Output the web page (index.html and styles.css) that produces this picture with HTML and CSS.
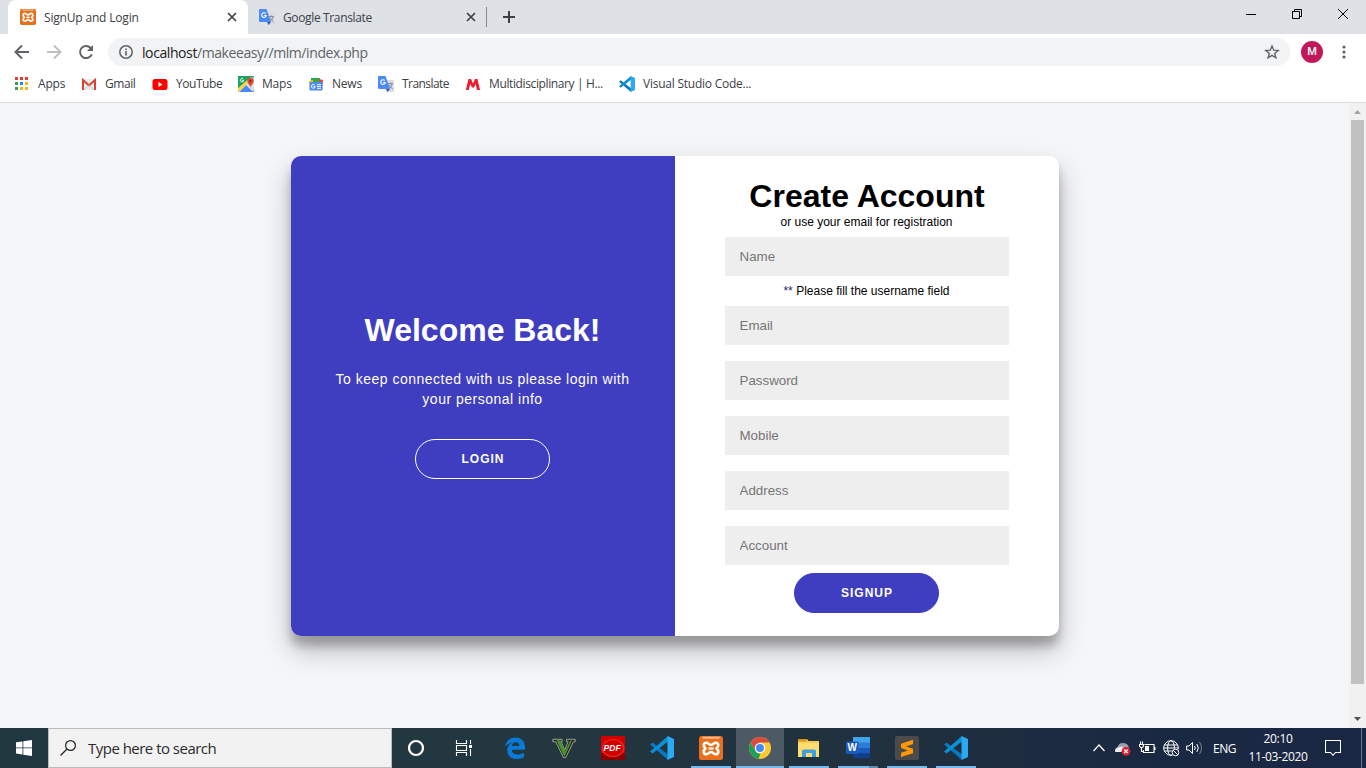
FILE: index.html
```html
<!DOCTYPE html>
<html lang="en">
<head>
<meta charset="utf-8">
<title>SignUp and Login</title>
<link rel="stylesheet" href="styles.css">
</head>
<body>
<svg class="defs" aria-hidden="true">
  <symbol id="xampp" viewBox="0 0 24 24">
    <rect width="24" height="24" rx="2.500" fill="#e8701d"/>
    <path d="M3 .8h18l-1 2H4z" fill="#f7b98b"/>
    <path d="M7.500 6.700C9.500 6.700 10 9 12 9s2.500-2.300 4.500-2.300c3.500 0 3.500 4 1 5.800 2.500 1.800 2.500 5.800-1 5.800-2 0-2.500-2.300-4.500-2.300s-2.500 2.300-4.500 2.300c-3.500 0-3.500-4-1-5.800-2.500-1.800-2.500-5.800 1-5.800z" fill="none" stroke="#fff" stroke-width="2.600" stroke-linejoin="round"/>
    <path d="M9.500 12.500h5" stroke="#fff" stroke-width="2.200"/>
  </symbol>
  <symbol id="translate" viewBox="0 0 16 16">
    <path d="M6 4h8.500Q16 4 16 5.500V16H9z" fill="#dadce0"/>
    <path d="M8 13h4l-2.500 3z" fill="#3554c7"/>
    <path d="M1 0h6.500L12 13H1.500Q0 13 0 11.500V1Q0 0 1 0z" fill="#4c8bf5"/>
    <path d="M6.700 4.500A2.300 2.300 0 1 0 7.300 6.500H5.200" fill="none" stroke="#fff" stroke-width="1.100"/>
    <path d="M10 7.700h5M12.500 6.500v1.200M14 8c-.5 2.200-1.900 3.800-3.500 4.600M11.200 9c.8 1.500 2 2.800 3.500 3.800" fill="none" stroke="#74808b" stroke-width=".9"/>
  </symbol>
  <symbol id="vscode" viewBox="0 0 24 24">
    <path d="M0 8.500l2.500-2L18 18.500V24z" fill="#0879bf"/>
    <path d="M0 15.500l2.500 2L18 5.500V0z" fill="#0d8fd6"/>
    <path d="M17.500 0L24 3v18l-6.500 3z" fill="#29aaf2"/>
  </symbol>
  <symbol id="close" viewBox="0 0 10 10">
    <path d="M1 1l8 8M9 1L1 9" fill="none" stroke="#3c4043" stroke-width="1.700"/>
  </symbol>
</svg>

<header class="tabstrip">
  <div class="tab tab-active">
    <svg class="i16"><use href="#xampp"/></svg>
    <span class="tab-title t-signup">SignUp and Login</span>
    <svg class="tab-close"><use href="#close"/></svg>
  </div>
  <div class="tab">
    <svg class="i16"><use href="#translate"/></svg>
    <span class="tab-title t-google">Google Translate</span>
    <svg class="tab-close"><use href="#close"/></svg>
  </div>
  <span class="tab-sep"></span>
  <svg class="newtab" viewBox="0 0 12 12"><path d="M6 0v12M0 6h12" stroke="#3c4043" stroke-width="2"/></svg>
  <div class="win-controls">
    <svg viewBox="0 0 12 12"><path d="M1 6.500h10" stroke="#000"/></svg>
    <svg viewBox="0 0 12 12"><path d="M1.500 3.500h7v7h-7zM3.500 3.500v-2h7v7h-2" fill="none" stroke="#000"/></svg>
    <svg viewBox="0 0 12 12"><path d="M1 1l10 10M11 1L1 11" stroke="#000"/></svg>
  </div>
</header>

<nav class="toolbar">
  <svg class="nav-i" viewBox="0 0 16 16"><path d="M15 8H2M8 1.500L1.500 8 8 14.500" fill="none" stroke="#5f6368" stroke-width="2"/></svg>
  <svg class="nav-i" viewBox="0 0 16 16"><path d="M1 8h13M8 1.500L14.500 8 8 14.500" fill="none" stroke="#bdbfc1" stroke-width="2"/></svg>
  <svg class="nav-i" viewBox="0 0 16 16"><path d="M13.800 10.300A6.100 6.100 0 1 1 12.500 3.700L14 5.200" fill="none" stroke="#5f6368" stroke-width="2"/><path d="M15 1v6H9z" fill="#5f6368"/></svg>
  <div class="omnibox">
    <svg class="info" viewBox="0 0 14 14"><circle cx="7" cy="7" r="6.200" fill="none" stroke="#5f6368" stroke-width="1.500"/><path d="M7 6v4.500M7 3.500V5" stroke="#5f6368" stroke-width="1.600"/></svg>
    <span class="url"><span class="host">localhost</span>/makeeasy//mlm/index.php</span>
    <svg class="star" viewBox="0 0 16 16"><path d="M8 2l1.700 4.200 4.500.3-3.500 2.900 1.200 4.400L8 11.400l-3.900 2.400 1.200-4.400L1.800 6.500l4.500-.3z" fill="none" stroke="#5f6368" stroke-width="1.400"/></svg>
  </div>
  <span class="avatar">M</span>
  <svg class="menu" viewBox="0 0 4 14"><g fill="#5f6368"><circle cx="2" cy="2" r="1.600"/><circle cx="2" cy="7" r="1.600"/><circle cx="2" cy="12" r="1.600"/></g></svg>
</nav>

<nav class="bookmarks">
  <a><svg class="i16" viewBox="0 0 16 16"><g fill="#ea3b30"><path d="M1 1h3v3H1zM6 1h3v3H6zM11 1h3v3h-3z"/></g><path d="M1 6h3v3H1zM1 11h3v3H1z" fill="#34a04f"/><path d="M6 6h3v3H6z" fill="#1a8cff"/><path d="M11 6h3v3h-3zM6 11h3v3H6zM11 11h3v3h-3z" fill="#fab515"/></svg><span class="b-apps">Apps</span></a>
  <a><svg class="i16" viewBox="0 0 16 16"><path d="M1 3h14v11H1z" fill="#eceaea"/><path d="M2 14V4l6 5.500L14 4v10" fill="none" stroke="#d54335" stroke-width="2"/><path d="M3.500 13.500L8 9.500l4.500 4" fill="none" stroke="#ccc"/></svg><span class="b-gmail">Gmail</span></a>
  <a><svg class="i16" viewBox="0 0 16 16"><rect x=".5" y="3" width="15" height="11" rx="2.500" fill="#f00"/><path d="M6.500 6l4 2.500-4 2.500z" fill="#fff"/></svg><span class="b-youtube">YouTube</span></a>
  <a><svg class="i16" viewBox="0 0 16 16"><rect width="16" height="16" rx="1" fill="#1ea362"/><path d="M0 14L14 1l2 1v12l-2 2H1z" fill="#dfe1e3"/><path d="M1 16l7-7 7 7z" fill="#4a89f3"/><path d="M0 12v3l1 1L13 4V1z" fill="#ffd34b"/><path d="M0 0h12L0 12z" fill="#1ea362"/><path d="M5.200 3A1.700 1.700 0 1 0 5.700 4.300H4" fill="none" stroke="#fff" stroke-width=".9"/><path d="M12.500 12c0-3-3.200-4-3.200-7a3.200 3.200 0 0 1 6.400 0c0 3-3.200 4-3.200 7z" fill="#dd4b3e"/><circle cx="12.500" cy="5" r="1.200" fill="#822f2b"/></svg><span class="b-maps">Maps</span></a>
  <a><svg class="i16" viewBox="0 0 16 16"><path d="M3 2l9 0v5H3z" fill="#2da94f"/><path d="M1 5l4-1v9H2z" fill="#ffc107"/><path d="M11 3l4 1-1 9h-3z" fill="#ea4335"/><rect x="1.500" y="6" width="13" height="8.500" rx="1" fill="#4b8bf4"/><path d="M6.700 9A1.900 1.900 0 1 0 7.200 10.600H5.400M9 8.700h4M9 10.500h4M9 12.300h4" fill="none" stroke="#fff" stroke-width="1"/></svg><span class="b-news">News</span></a>
  <a><svg class="i16"><use href="#translate"/></svg><span class="b-translate">Translate</span></a>
  <a><svg class="i16" viewBox="0 0 16 16"><path d="M.8 14L3.500 3H6l2 4.500L10 3h2.500L15 14h-3L10.600 8 9 11.500H7L5.300 8 3.700 14z" fill="#ed1c2e"/></svg><span class="b-multi">Multidisciplinary | H...</span></a>
  <a><svg class="i16"><use href="#vscode"/></svg><span class="b-vs">Visual Studio Code...</span></a>
</nav>

<div class="viewport">
  <main class="page">
    <div class="card">
      <section class="welcome">
        <h1>Welcome Back!</h1>
        <p>To keep connected with us please login with your personal info</p>
        <button class="btn btn-ghost">LOGIN</button>
      </section>
      <form class="signup">
        <h1>Create Account</h1>
        <span class="hint">or use your email for registration</span>
        <input type="text" placeholder="Name">
        <span class="error"><span class="stars">**</span> Please fill the username field</span>
        <input type="text" placeholder="Email">
        <span class="gap"></span>
        <input type="text" placeholder="Password">
        <span class="gap"></span>
        <input type="text" placeholder="Mobile">
        <span class="gap"></span>
        <input type="text" placeholder="Address">
        <span class="gap"></span>
        <input type="text" placeholder="Account">
        <button type="button" class="btn btn-solid">SIGNUP</button>
      </form>
    </div>
  </main>
  <aside class="scrollbar">
    <svg viewBox="0 0 17 17"><path d="M5 11l3.500-4 3.500 4z" fill="#a3a3a3"/></svg>
    <span class="thumb"></span>
    <svg viewBox="0 0 17 17"><path d="M5 6l3.500 4L12 6z" fill="#505050"/></svg>
  </aside>
</div>

<footer class="taskbar">
  <div class="start"><svg viewBox="0 0 16 16"><path d="M0 2.300L6.500 1.400v6.100H0zM7.300 1.300L16 0v7.500H7.300zM0 8.300h6.500v6.200L0 13.600zM7.300 8.300H16V16l-8.700-1.300z" fill="#fff"/></svg></div>
  <div class="search">
    <svg viewBox="0 0 16 16"><circle cx="10.500" cy="5.500" r="4.900" fill="none" stroke="#222" stroke-width="1.200"/><path d="M7 9L.5 15.500" stroke="#222" stroke-width="1.300"/></svg>
    <span class="search-text">Type here to search</span>
  </div>
  <div class="apps">
    <div class="app"><svg viewBox="0 0 24 24"><circle cx="12" cy="12" r="7" fill="none" stroke="#fff" stroke-width="2.200"/></svg></div>
    <div class="app"><svg viewBox="0 0 24 24"><path d="M3.500 4v3.500h10V4M3.500 20v-3.500h10V20M3.500 9.500h10V14.500h-10zM17.500 4v4M17.500 13v7" fill="none" stroke="#fff" stroke-width="1.100"/><path d="M16 9h3v3h-3z" fill="#fff"/></svg></div>
    <div class="app"><svg viewBox="0 0 24 24"><path d="M2 10.500C3 5 7 1.500 12.500 1.500 19 1.500 22 6 22 11v2.700H8.700c.2 3.300 3 4.800 6.300 4.800 2.300 0 4.300-.6 6-1.700v4.500c-2 1.100-4.200 1.700-7 1.700-6 0-9.700-3.500-9.700-8.500 0-3.700 2-6.600 5.200-8.200C6.700 7.100 4 8.400 2 10.500zM8.900 10h7.500c0-2.300-1.200-3.700-3.600-3.700-2.200 0-3.600 1.300-3.900 3.700z" fill="#0a7ad9"/></svg></div>
    <div class="app"><svg viewBox="0 0 24 24"><path d="M.8 3.300h9.400v2.400H9l3.800 8.300 3.400-8.300h-1.700V3.300h8.700v2.400h-1.700l-7.800 16h-2.200L3.800 5.700h-3z" fill="#1c2418" stroke="#a9aea6" stroke-width=".9"/><path d="M4.500 4.300h4L13 15l5.300-10.500h1.800L12.300 21z" fill="#4a9130"/></svg></div>
    <div class="app"><svg viewBox="0 0 24 24"><path d="M0 0h24v24H0z" fill="#d30000"/><path d="M0 17h24v7H0z" fill="#8c0000"/><ellipse cx="12" cy="12" rx="10.800" ry="8.500" fill="#d00000" stroke="#fb2727" stroke-width="1.200"/><text x="2.600" y="15" class="pdf">PDF</text></svg></div>
    <div class="app"><svg><use href="#vscode"/></svg></div>
    <div class="app running"><svg><use href="#xampp"/></svg></div>
    <div class="app running focused"><svg viewBox="0 0 24 24"><circle cx="12" cy="12" r="11" fill="#fbc934"/><path d="M2.500 6.500A11 11 0 0 1 21.500 6.500H12L7.500 15z" fill="#dc4a3d"/><path d="M2.500 6.500L7.500 15c1 2 3 2.800 5 2.500l-2 5.400A11 11 0 0 1 2.500 6.500z" fill="#1c9f58"/><circle cx="12" cy="12" r="5.200" fill="#fff"/><circle cx="12" cy="12" r="4" fill="#4688f1"/></svg></div>
    <div class="app running"><svg viewBox="0 0 24 24"><path d="M1 3h9l1.500 2H22v16H1z" fill="#f7cb58"/><path d="M1 3h9l-1 2.500H1z" fill="#d99b0d"/><path d="M1 7h21v14H1z" fill="#ffdc70"/><path d="M5 21v-6q0-1.500 1.500-1.500h11Q19 13.500 19 15v6h-4v-4H9v4z" fill="#3d9ee1"/></svg></div>
    <div class="app running split"><svg viewBox="0 0 24 24"><path d="M7 1h17v6H7z" fill="#41a5ee"/><path d="M7 6.500h17V12H7z" fill="#2b7cd3"/><path d="M7 12h17v5.500H7z" fill="#185abd"/><path d="M7 17.500h17V22H7z" fill="#103f91"/><rect y="5.500" width="12.500" height="12.500" rx="1" fill="#185abd"/><text x="1.400" y="15.300" class="word">W</text></svg></div>
    <div class="app running"><svg viewBox="0 0 24 24"><rect width="24" height="24" rx="2" fill="#4b4b4b"/><path d="M6 7.800l12-4V8l-7 2.500 7 2.300v4.400L6 21v-4.200l7-2.400-7-2.300z" fill="#ff9800"/></svg></div>
    <div class="app running"><svg><use href="#vscode"/></svg></div>
  </div>
  <div class="tray">
    <svg class="chev" viewBox="0 0 12 8"><path d="M.5 7L6 1l5.500 6" fill="none" stroke="#fff" stroke-width="1.200"/></svg>
    <svg class="cloud" viewBox="0 0 16 14"><path d="M1 10Q-.5 7 3 5.500q1-5 6-4.500Q14 1 14.500 7v3z" fill="#9ba1ab"/><path d="M1 10Q-.5 7 3 5.500l5-1 3 5.500z" fill="#eceef0"/><circle cx="11.500" cy="9.300" r="4.400" fill="#e02030"/><path d="M9.700 7.500l3.600 3.600M13.300 7.500l-3.600 3.600" stroke="#fff" stroke-width="1.300"/></svg>
    <svg class="batt" viewBox="0 0 17 14"><path d="M5.500 3.500H15v8H4.500V9M16 6v3M1.500.5v2.500M3.500.5v2.500M.5 3.500h4V5L3.500 6.500h-2L.5 5zM2.500 6.500V10.500h2" fill="none" stroke="#fff" stroke-width="1.100"/><path d="M6 5h4v5H6z" fill="#fff"/></svg>
    <svg class="globe" viewBox="0 0 17 17"><circle cx="8" cy="8" r="7.300" fill="none" stroke="#fff"/><ellipse cx="8" cy="8" rx="3.400" ry="7.300" fill="none" stroke="#fff"/><path d="M1.500 5h13M.7 8h14.600M1.500 11h10" stroke="#fff"/><circle cx="12.500" cy="12.500" r="4" fill="#1a2942"/><circle cx="12.500" cy="12.500" r="3.300" fill="none" stroke="#fff"/><path d="M10.200 10.200l4.600 4.600" stroke="#fff"/></svg>
    <svg class="vol" viewBox="0 0 17 14"><path d="M.6 5h2.500L6.500 1.500v11L3.100 9H.6z" fill="none" stroke="#fff"/><path d="M8.500 5q1.500 2 0 4M10.800 3q3 4 0 8" fill="none" stroke="#fff"/><path d="M13.500 1q4 6 0 12" fill="none" stroke="#77818f"/></svg>
    <span class="lang">ENG</span>
    <div class="clock"><span class="time">20:10</span><span class="date">11-03-2020</span></div>
    <svg class="note" viewBox="0 0 16 16"><path d="M.5.500h15v12h-5L8 15.300 5.500 12.500h-5z" fill="none" stroke="#fff" stroke-width="1.100"/></svg>
    <span class="peek"></span>
  </div>
</footer>
</body>
</html>
```
FILE: styles.css
```css
* { box-sizing: border-box; }
body {
  margin: 0;
  width: 1366px;
  height: 768px;
  overflow: hidden;
  display: flex;
  flex-direction: column;
  font-family: "Open Sans", "Noto Sans", sans-serif;
  font-size: 12px;
  color: #3c4043;
  white-space: nowrap;
}
svg { display: block; flex: none; }
.defs { display: none; }
.i16 { width: 16px; height: 16px; }

/* tab strip */
.tabstrip { flex: none; height: 34px; background: #dee1e6; display: flex; align-items: center; padding-left: 8px; }
.tab { width: 239px; height: 34px; display: flex; align-items: center; padding: 0 11px; }
.tab-active { width: 240px; background: #fff; border-radius: 8px 8px 0 0; padding: 0 11px 0 12px; }
.tab-title { margin-left: 8px; flex: 1; }
.t-signup { letter-spacing: -.18px; }
.t-google { letter-spacing: -.36px; }
.tab-close { width: 10px; height: 10px; }
.tab-sep { width: 1px; height: 20px; background: #85898e; margin-left: -1px; }
.newtab { width: 12px; height: 12px; margin-left: 16px; }
.win-controls { margin-left: auto; display: flex; gap: 34px; padding: 0 17px 6px 0; }
.win-controls svg { width: 12px; height: 12px; }

/* toolbar */
.toolbar { flex: none; height: 36px; background: #fff; display: flex; align-items: center; padding-left: 14px; }
.nav-i { width: 16px; height: 16px; margin-right: 16px; }
.omnibox { width: 1182px; height: 28px; margin: 0 0 0 -2px; background: #f1f3f4; border-radius: 14px; display: flex; align-items: center; padding: 0 10px 0 11px; }
.info { width: 14px; height: 14px; }
.url { margin-left: 9px; flex: 1; font-size: 14px; color: #5f6368; letter-spacing: -.41px; }
.host { color: #202124; }
.star { width: 16px; height: 16px; }
.avatar { width: 22px; height: 22px; margin-left: 11px; border-radius: 50%; background: #c2185b; color: #fff; font: 500 11px/22px Roboto, sans-serif; text-align: center; }
.menu { width: 4px; height: 14px; margin-left: 19px; }

/* bookmarks bar */
.bookmarks { flex: none; height: 33px; background: #fff; border-bottom: 1px solid #dadce0; display: grid; grid-template-columns: 67px 71px 86px 70px 70px 87px 154px 150px; padding: 0 0 5px 14px; align-items: center; }
.bookmarks a { display: flex; align-items: center; gap: 8px; }
.b-apps { letter-spacing: -.2px; }
.b-gmail, .b-youtube { letter-spacing: -.45px; }
.b-maps, .b-news { letter-spacing: -.2px; }
.b-translate { letter-spacing: -.55px; }
.b-multi { letter-spacing: -.38px; }
.b-vs { letter-spacing: -.24px; }

/* page */
.viewport { flex: none; height: 625px; display: flex; background: #f5f6f8; }
.page { flex: 1; display: flex; justify-content: center; align-items: flex-start; padding: 53px 0 0 1px; font-family: "Liberation Sans", Arial, sans-serif; color: #000; white-space: normal; }
.card { width: 768px; height: 480px; display: flex; border-radius: 10px; overflow: hidden; background: #fff; box-shadow: 0 14px 28px rgba(0, 0, 0, .25), 0 10px 10px rgba(0, 0, 0, .22); }
.welcome, .signup { width: 384px; display: flex; flex-direction: column; align-items: center; justify-content: center; text-align: center; }
.welcome { background: #3f3dc0; color: #fff; padding: 0 40.500px 0 39.500px; }
.signup { padding: 0 50px; }
h1 { margin: 0; padding-bottom: 2px; font-size: 32px; line-height: 34px; font-weight: bold; }
.welcome p { margin: 20px 0 30px; font-size: 14px; line-height: 20px; letter-spacing: .5px; }
.hint, .error { font-size: 12px; line-height: 14px; padding-right: 1px; }
.stars { color: #1b2a63; }
.signup input { width: 284px; height: 39px; margin: 8px 0; padding: 12px 15px 12px 14.500px; border: 0; background: #eee; font: 13.333px "Liberation Sans", Arial, sans-serif; }
.signup input::placeholder { color: #757575; }
.gap { height: 0; }
.btn { height: 40px; padding: 0; border: 1px solid #3f3dc0; border-radius: 20px; background: #3f3dc0; color: #fff; font: bold 12px "Liberation Sans", Arial, sans-serif; letter-spacing: 1px; }
.btn-solid { width: 145px; margin-right: 1px; padding-left: 1px; }
.btn-ghost { width: 135px; padding-left: 1px; border-color: #fff; }
.scrollbar { width: 17px; background: #f1f1f1; display: flex; flex-direction: column; }
.scrollbar svg { width: 17px; height: 17px; }
.thumb { flex: none; width: 13px; height: 564px; margin: 0 2px 27px; background: #c1c1c1; }

/* taskbar */
.taskbar { flex: none; height: 40px; display: flex; background: linear-gradient(90deg, #20373f 0%, #23373f 40%, #20303f 65%, #1a2942 85%, #1a2744 100%); color: #fff; }
.start { width: 48px; display: flex; align-items: center; justify-content: center; }
.start svg { width: 16px; height: 16px; }
.search { width: 344px; background: #f2f2f2; border: 1px solid #b9bbbc; color: #2b2b2b; display: flex; align-items: center; padding-left: 11px; font-size: 15px; letter-spacing: -.52px; }
.search svg { width: 16px; height: 16px; margin-right: 12px; }
.apps { display: flex; gap: 1.100px; }
.app { width: 48px; height: 40px; display: flex; align-items: center; justify-content: center; }
.app svg { width: 24px; height: 24px; }
.app:nth-child(n+3):nth-child(-n+6) { padding-left: 1px; }
.running { background: linear-gradient(#76b9ed, #76b9ed) 50% 100% / 40px 2px no-repeat; }
.focused { background: linear-gradient(#76b9ed, #76b9ed) 50% 100% / 48px 2px no-repeat, #4b5a64; }
.split { background: linear-gradient(90deg, #76b9ed 31px, #5c8bad 31px) 50% 100% / 40px 2px no-repeat; }
.pdf { font: italic bold 8.500px "Liberation Sans", sans-serif; fill: #fff; }
.word { font: bold 10px "Liberation Sans", sans-serif; fill: #fff; }
.tray { margin-left: auto; width: 273px; display: flex; align-items: center; }
.chev { width: 12px; height: 8px; }
.cloud { width: 17px; height: 14px; margin: 2px 0 0 9px; }
.batt { width: 17px; height: 14px; margin-left: 8px; }
.globe { width: 17px; height: 17px; margin-left: 7px; }
.vol { width: 17px; height: 14px; margin-left: 6px; }
.lang { width: 35px; margin-left: 10px; letter-spacing: -.45px; }
.clock { width: 60px; display: flex; flex-direction: column; align-items: center; line-height: 18px; padding-bottom: 1px; letter-spacing: -.35px; }
.note { width: 16px; height: 16px; margin-left: 17px; }
.peek { width: 1px; height: 40px; margin-left: 20px; background: #6d7686; }
```
